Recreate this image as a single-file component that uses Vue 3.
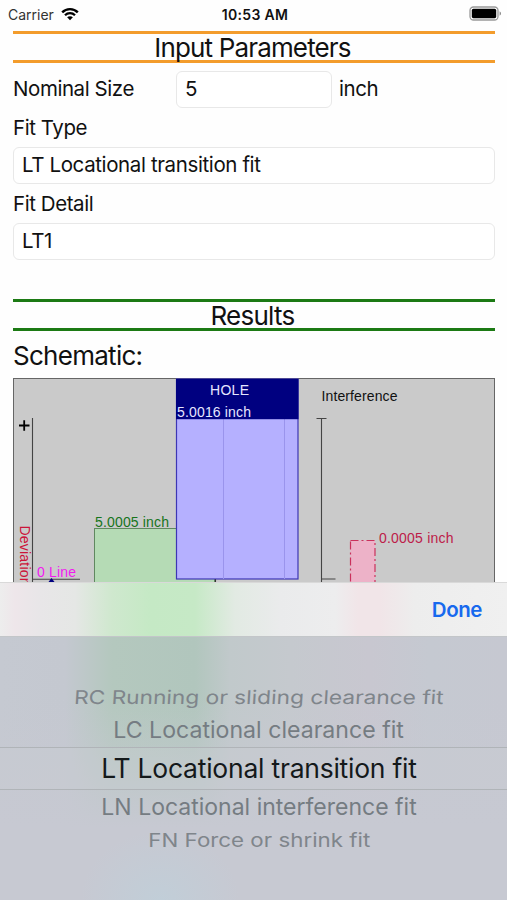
<script setup>
const options = [
  { label: 'RC Running or sliding clearance fit', cls: 'far top' },
  { label: 'LC Locational clearance fit', cls: 'near upper' },
  { label: 'LT Locational transition fit', cls: 'selected' },
  { label: 'LN Locational interference fit', cls: 'near lower' },
  { label: 'FN Force or shrink fit', cls: 'far bottom' },
]
</script>

<template>
  <div class="screen">
    <header class="status">
      <div class="carrier">
        <span>Carrier</span>
        <svg width="18" height="14" viewBox="0 0 18 14">
          <path d="M1.200 5.300C5.400 1 12.600 1 16.800 5.300" fill="none" stroke="#000" stroke-width="2.400" />
          <path d="M4 8.200c2.800-2.800 7.200-2.800 10 0" fill="none" stroke="#000" stroke-width="2.300" />
          <path d="M9 13.300l-2.900-3c1.600-1.500 4.200-1.500 5.800 0z" fill="#000" />
        </svg>
      </div>
      <div class="clock">10:53 AM</div>
      <svg class="battery" width="33" height="16" viewBox="0 0 33 16">
        <rect x="1" y="1" width="28" height="13" rx="3.500" fill="#fff" stroke="#999" stroke-width="1.300" />
        <rect x="2.800" y="2.800" width="24.400" height="9.400" rx="1.600" fill="#000" />
        <path d="M30.600 5.300c1.900.8 1.900 3.600 0 4.400z" fill="#888" />
      </svg>
    </header>

    <main class="body">
      <h2 class="section inputs"><span>Input Parameters</span></h2>
      <div class="size-row">
        <label class="label size-label"><span>Nominal Size</span></label>
        <div class="field size-field">5</div>
        <span class="label unit">inch</span>
      </div>
      <div class="label row-label">Fit Type</div>
      <div class="field">LT Locational transition fit</div>
      <div class="label row-label">Fit Detail</div>
      <div class="field">LT1</div>
      <h2 class="section results"><span>Results</span></h2>
      <h3 class="schematic-title">Schematic:</h3>
      <svg class="schematic" width="482" height="204" viewBox="13 378 482 204">
        <rect x="13.500" y="378.500" width="481" height="240" fill="#cacaca" stroke="#666" />
        <path d="M32.500 418v164M32 579.200h48M321.500 418.500v163.500M316.500 418.500h10M321.500 579h14M215.500 578v4" stroke="#444" stroke-width="1.100" fill="none" />
        <path d="M19 425.500h10.500M24.200 420.300v10.500" stroke="#000" stroke-width="1.800" />
        <rect x="94.500" y="528.500" width="120" height="60" fill="#b5dbb5" stroke="#608860" />
        <rect x="176.500" y="379" width="121.500" height="200" fill="#b5b0ff" stroke="#3c36b4" stroke-width="1.200" />
        <path d="M223.500 419v160M284.500 419v160" stroke="#9a94ec" stroke-width="1" />
        <rect x="176" y="379" width="122.500" height="40.200" fill="#000080" />
        <path d="M215.500 579.500v3" stroke="#333" />
        <rect x="350.500" y="540.500" width="24.500" height="60" fill="#edb2c8" stroke="#ca315c" stroke-dasharray="8 3 2 3" stroke-width="1.200" />
        <path d="M51.500 578l3 4h-6z" fill="#000080" />
        <g class="plot-text">
          <text x="210" y="394.800" textLength="39" fill="#e6e6ff">HOLE</text>
          <text x="177" y="416.500" textLength="74" fill="#e6e6ff">5.0016 inch</text>
          <text x="321.500" y="401" textLength="76" fill="#111">Interference</text>
          <text x="95" y="527.300" textLength="74" fill="#16751b">5.0005 inch</text>
          <text x="379" y="543" textLength="74.500" fill="#bd1c49">0.0005 inch</text>
          <text x="37" y="577.400" textLength="39" fill="#f01af0">0 Line</text>
          <text transform="translate(19.500 525.500) rotate(90)" textLength="60" fill="#cc1439">Deviation</text>
        </g>
      </svg>
    </main>

    <section class="sheet">
      <div class="toolbar"><button class="done">Done</button></div>
      <div class="wheel">
        <div v-for="o in options" :key="o.label" class="option" :class="o.cls">
          <span>{{ o.label }}</span>
        </div>
      </div>
    </section>
  </div>
</template>

<style>
body { background: #fff; }
</style>

<style scoped>
.screen { width: 507px; height: 900px; overflow: hidden; display: flex; flex-direction: column; background: #fefefe; color: #111; font-family: Inter, "Liberation Sans", sans-serif; }
.status { height: 31px; flex: none; display: grid; grid-template-columns: 1fr auto 1fr; align-items: center; padding: 0 5px 3px 8px; box-sizing: border-box; font-size: 14px; }
.carrier { display: flex; align-items: center; gap: 7px; color: #333; }
.clock { font-weight: 600; font-size: 14px; letter-spacing: 0.300px; }
.battery { justify-self: end; }
.body { height: 551px; flex: none; padding: 0 12px 0 13px; display: flex; flex-direction: column; }
.section { margin: 0; height: 32px; box-sizing: border-box; border: solid #f39c2c; border-width: 3px 0; padding: 1px 3px 0 0; display: flex; align-items: center; justify-content: center; font-weight: 400; font-size: 26px; letter-spacing: -0.850px; line-height: 27px; flex: none; }
.results { margin-top: 39px; border-color: #1c7a14; letter-spacing: -0.750px; }
.size-row { display: flex; align-items: center; height: 38px; margin-top: 7px; flex: none; }
.label { font-size: 20.500px; letter-spacing: -0.430px; line-height: 39px; }
.size-label { width: 163px; padding-bottom: 2px; }
.size-field { width: 156px; }
.size-row .size-field { line-height: 34px; }
.unit { margin-left: 7px; padding-bottom: 2px; }
.row-label { height: 39px; flex: none; }
.field { height: 37px; flex: none; box-sizing: border-box; border: 1px solid #e8e8e8; border-radius: 6px; padding: 0 8px; line-height: 34px; font-size: 20.500px; letter-spacing: -0.380px; background: #fff; }
.schematic-title { margin: 0; font-weight: 400; font-size: 26px; letter-spacing: -0.720px; line-height: 47px; height: 47px; padding-top: 1px; box-sizing: border-box; flex: none; }
.schematic { display: block; flex: none; }
.plot-text { font-family: "Liberation Sans", Arial, sans-serif; font-size: 14px; }
.sheet { height: 318px; flex: none; display: flex; flex-direction: column; }
.toolbar { height: 54px; box-sizing: border-box; border-top: 1px solid #d9d9d9; display: flex; align-items: center; justify-content: flex-end; padding-right: 25px; background: linear-gradient(90deg, #ededed 0, #eee6ea 15px, #e8e6e8 40px, #e5e7e5 75px, #cfe8ce 112px, #c5e9c5 150px, #c6e9c6 195px, #e2eae3 235px, #eaebec 280px, #ededee 335px, #f1e5e8 358px, #f1e5e8 380px, #ededed 415px, #f0f0f0 507px); }
.done { border: 0; padding: 0; background: none; font: 600 20.500px Inter, sans-serif; letter-spacing: -0.450px; color: #1769ee; }
.wheel { height: 264px; box-sizing: border-box; padding-top: 45px; border-top: 1px solid #c3c6c9; display: flex; flex-direction: column; align-items: stretch; color: #7f858b;
  background: radial-gradient(ellipse 80px 70px at 160px 264px, #c1ced8, rgba(193, 206, 216, 0)), linear-gradient(180deg, rgba(199, 201, 210, 0) 60px, #c7c9d2 190px), linear-gradient(90deg, #c5c9d1 0, #c4c8d0 65px, #b4c8be 112px, #b1c6bd 195px, #c1c9cb 230px, #c5c9ce 290px, #c8c7d0 370px, #c5c9d1 430px, #c6c8d1 507px); }
.option { display: flex; align-items: center; justify-content: center; box-sizing: border-box; flex: none; padding-left: 11px; white-space: nowrap; font-size: 24px; }
.option span { display: block; line-height: 30px; }
.top { height: 31px; }
.top span { transform: translateX(-0.500px) scale(0.946, 0.790) skewX(-3deg); }
.near { height: 34px; font-size: 23px; color: #757c82; }
.upper span { transform: scale(1.005, 1); }
.selected { height: 43px; border: solid #b0b4b8; border-width: 1px 0; padding-bottom: 1px; color: #14191b; font-size: 26.500px; letter-spacing: -0.240px; background: rgba(205, 207, 211, 0.25); }
.bottom { height: 34px; }
.bottom span { transform: scale(0.930, 0.770); }
</style>
